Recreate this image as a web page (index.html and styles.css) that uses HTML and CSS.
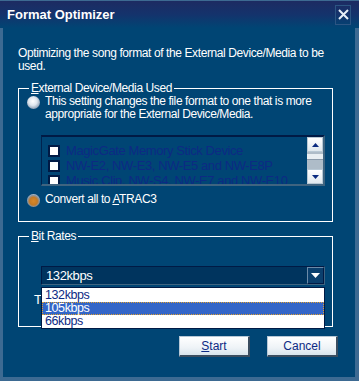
FILE: index.html
```html
<!DOCTYPE html>
<html lang="en">
<head>
  <meta charset="UTF-8">
  <title>Format Optimizer</title>
  <link rel="stylesheet" href="styles.css">
</head>
<body>
  <div class="window">
    <div class="titlebar">
      <span class="title">Format Optimizer</span>
      <span class="close">
        <svg width="11" height="11" viewBox="0 0 11 11"><path d="M1 1 L10 10 M10 1 L1 10" stroke="#e6eef7" stroke-width="2"/></svg>
      </span>
    </div>
    <div class="content">
      <p class="intro">Optimizing the song format of the External Device/Media to be used.</p>

      <fieldset class="group device-group">
        <legend><u>E</u>xternal Device/Media Used</legend>
        <div class="radio-row">
          <span class="radio"></span>
          <span class="radio-text">This setting changes the file format to one that is more appropriate for the External Device/Media.</span>
        </div>
        <div class="listbox">
          <div class="list-items">
            <div class="list-item"><span class="check"></span>MagicGate Memory Stick Device</div>
            <div class="list-item"><span class="check"></span>NW-E2, NW-E3, NW-E5 and NW-E8P</div>
            <div class="list-item"><span class="check"></span>Music Clip, NW-S4, NW-E7 and NW-E10</div>
          </div>
          <div class="scrollbar">
            <div class="sb-btn"><svg width="7" height="4" viewBox="0 0 7 4"><path d="M3.5 0 L7 4 L0 4 Z" fill="#0a2a80"/></svg></div>
            <div class="sb-track"><div class="sb-thumb"></div></div>
            <div class="sb-btn"><svg width="7" height="4" viewBox="0 0 7 4"><path d="M0 0 L7 0 L3.5 4 Z" fill="#0a2a80"/></svg></div>
          </div>
        </div>
        <div class="radio-row checked-row">
          <span class="radio checked"></span>
          <span class="radio-text">Convert all to <u>A</u>TRAC3</span>
        </div>
      </fieldset>

      <fieldset class="group bitrate-group">
        <legend><u>B</u>it Rates</legend>
        <div class="combo-wrap">
          <div class="combo">
            <span class="combo-value">132kbps</span>
            <span class="combo-btn"><svg width="9" height="5" viewBox="0 0 9 5"><path d="M0 0 L9 0 L4.5 5 Z" fill="#ffffff"/></svg></span>
          </div>
          <div class="hidden-label">T</div>
          <div class="dropdown">
            <div class="dd-item">132kbps</div>
            <div class="dd-item selected">105kbps</div>
            <div class="dd-item">66kbps</div>
          </div>
        </div>
      </fieldset>

      <div class="buttons">
        <button class="btn"><u>S</u>tart</button>
        <button class="btn">Cancel</button>
      </div>
    </div>
  </div>
</body>
</html>
```

FILE: styles.css
```css
* {
  box-sizing: border-box;
}
body {
  margin: 0;
  font-family: 'Liberation Sans', Arial, sans-serif;
  font-size: 12px;
  letter-spacing: -0.4px;
  background: #3d6a92;
}
.window {
  width: 359px;
  height: 381px;
  background: #004574;
  border-left: 3px solid #3d6a92;
  border-right: 4px solid #3d6a92;
  border-bottom: 4px solid #3d6a92;
  display: flex;
  flex-direction: column;
}
.titlebar {
  height: 28px;
  background: linear-gradient(to bottom, #1d2b62 0%, #14336c 50%, #004574 100%);
  border-top: 1px solid #3d6a92;
  display: flex;
  align-items: center;
  justify-content: space-between;
  margin: 0 -4px 0 -3px;
  padding-left: 7px;
  padding-right: 8px;
}
.title {
  color: #fff;
  font-weight: bold;
  font-size: 13px;
  letter-spacing: 0;
}
.close {
  width: 16px;
  height: 20px;
  border: 1px solid #2c5583;
  display: flex;
  align-items: center;
  justify-content: center;
}
.content {
  padding: 19px 12px 0 15px;
  color: #fff;
}
.intro {
  margin: 0 0 9px 0;
  line-height: 13px;
  width: 310px;
}
.group {
  border: 1px solid #fff;
  margin: 0;
  padding: 0 6px 6px 8px;
  width: 315px;
}
.group legend {
  padding: 0 2px;
  margin-left: 2px;
  line-height: 13px;
}
.radio-row {
  display: flex;
  align-items: flex-start;
  gap: 5px;
  line-height: 13px;
}
.radio {
  flex: none;
  width: 13px;
  height: 13px;
  border-radius: 50%;
  background: radial-gradient(circle at 45% 40%, #ffffff 0%, #dfe6ee 40%, #7c90a8 80%, #34506e 100%);
  margin-top: 1px;
}
.radio.checked {
  background: radial-gradient(circle at 50% 55%, #d8892a 0%, #c47a26 40%, #8a98a8 62%, #dbe3ea 80%, #6a8098 100%);
}
.listbox {
  margin: 14px 0 0 14px;
  width: 284px;
  height: 51px;
  border-top: 2px solid #001a45;
  border-left: 1px solid #00234f;
  border-right: 2px solid #3f6480;
  border-bottom: 2px solid #3f6480;
  display: flex;
  overflow: hidden;
}
.list-items {
  flex: 1;
  padding: 6px 0 0 6px;
  overflow: hidden;
}
.list-item {
  display: flex;
  align-items: center;
  gap: 6px;
  height: 15px;
  color: #0d2a84;
  white-space: nowrap;
  font-size: 13px;
}
.check {
  flex: none;
  width: 12px;
  height: 12px;
  background: #fff;
  border: 2px solid #001a45;
}
.scrollbar {
  width: 16px;
  display: flex;
  flex-direction: column;
}
.sb-btn {
  height: 15px;
  background: linear-gradient(to bottom, #ffffff, #dfe8ee);
  border: 1px solid #b8c8d4;
  display: flex;
  align-items: center;
  justify-content: center;
}
.sb-track {
  flex: 1;
  background: #aebcc8;
  padding-top: 2px;
}
.sb-thumb {
  height: 6px;
  background: #e8eef2;
  border-bottom: 1px solid #8a9aaa;
}
.checked-row {
  margin-top: 7px;
}
.device-group {
  height: 140px;
}
.bitrate-group {
  margin-top: 8px;
  height: 97px;
  padding-top: 23px;
}
.combo-wrap {
  position: relative;
  margin-left: 14px;
  width: 284px;
}
.combo {
  height: 19px;
  background: #00345e;
  border: 1px solid #001a45;
  border-right-color: #3f6480;
  border-bottom-color: #3f6480;
  display: flex;
  align-items: center;
  justify-content: space-between;
}
.combo-value {
  padding-left: 4px;
  font-size: 13px;
}
.combo-btn {
  width: 17px;
  height: 17px;
  border: 1px solid #6b8aa8;
  border-right-color: #001a45;
  border-bottom-color: #001a45;
  display: flex;
  align-items: center;
  justify-content: center;
  background: #0a3f6d;
}
.hidden-label {
  margin: 7px 0 0 -7px;
  font-size: 13px;
}
.dropdown {
  position: absolute;
  top: 21px;
  left: 0;
  width: 284px;
  background: #fff;
  border: 1px solid #001a45;
  padding: 1px 0 0;
}
.dd-item {
  height: 13px;
  line-height: 13px;
  padding-left: 3px;
  color: #0d2a84;
  font-size: 12.5px;
}
.dd-item.selected {
  background: #3366c8;
  outline: 1px dotted #e0a030;
  outline-offset: -1px;
  color: #fff;
}
.buttons {
  display: flex;
  justify-content: flex-end;
  gap: 17px;
  margin-top: 9px;
  padding-right: 5px;
}
.btn {
  width: 71px;
  height: 21px;
  font-family: 'Liberation Sans', Arial, sans-serif;
  font-size: 12px;
  color: #0d2a84;
  background: linear-gradient(to bottom, #ffffff 0%, #eef3f7 60%, #d8e4ec 100%);
  border: 1px solid #b7c8d6;
  border-right: 2px solid #3a4d60;
  border-bottom: 2px solid #3a4d60;
  padding: 0;
}
```
